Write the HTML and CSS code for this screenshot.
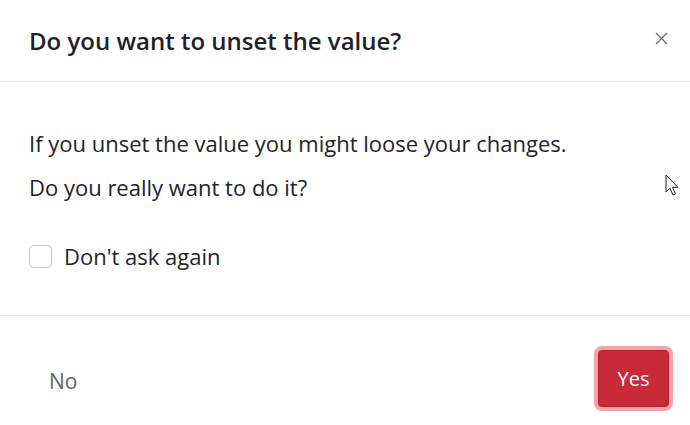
FILE: index.html
```html
<!DOCTYPE html>
<html>
<head>
<meta charset="utf-8">
<link rel="stylesheet" href="styles.css">
</head>
<body>
<div class="modal">
  <div class="modal-header">
    <h5 class="modal-title">Do you want to unset the value?</h5>
    <button class="close" aria-label="Close">
      <svg width="13" height="13" viewBox="0 0 13 13"><path d="M1 1L12 12M12 1L1 12" stroke="#6b6f73" stroke-width="1.3" fill="none"/></svg>
    </button>
  </div>
  <div class="modal-body">
    <p class="line">If you unset the value you might loose your changes.</p>
    <p class="line">Do you really want to do it?</p>
    <label class="check">
      <span class="box"></span>
      <span>Don't ask again</span>
    </label>
  </div>
  <div class="modal-footer">
    <button class="btn-no">No</button>
    <button class="btn-yes">Yes</button>
  </div>
  <svg class="cursor" width="16" height="24" viewBox="0 0 16 24"><path d="M1 1L1 18L5 14.2L8 21L10.5 20L7.6 13.3L13 13.3Z" fill="#fff" stroke="#222" stroke-width="1" stroke-linejoin="round"/></svg>
</div>
</body>
</html>
```
FILE: styles.css
```css
html, body {
  margin: 0;
  padding: 0;
  background: #fff;
}
body {
  font-family: "Open Sans", "Noto Sans", sans-serif;
  color: #212529;
}
.modal {
  position: relative;
  width: 690px;
  height: 425px;
  display: flex;
  flex-direction: column;
}
.modal-header {
  height: 82px;
  flex: none;
  box-sizing: border-box;
  border-bottom: 1px solid #dee2e6;
  display: flex;
  align-items: center;
  justify-content: space-between;
  padding: 0 19px 0 29px;
}
.modal-title {
  margin: 0;
  font-size: 24px;
  font-weight: 600;
  color: #1f2226;
}
.close {
  background: none;
  border: 0;
  padding: 0;
  width: 20px;
  height: 20px;
  display: flex;
  align-items: center;
  justify-content: center;
  margin-top: -4px;
}
.modal-body {
  height: 234px;
  flex: none;
  box-sizing: border-box;
  border-bottom: 1px solid #dee2e6;
  padding: 46px 29px 0;
}
.line {
  margin: 0 0 14px;
  font-size: 22px;
  line-height: 30px;
}
.check {
  display: flex;
  align-items: center;
  gap: 12px;
  margin-top: 39px;
  font-size: 22px;
  line-height: 30px;
}
.box {
  width: 23px;
  height: 23px;
  border: 1px solid #c4c7ca;
  border-radius: 5px;
  box-sizing: border-box;
  background: #fff;
}
.modal-footer {
  flex: 1;
  display: flex;
  align-items: center;
  justify-content: space-between;
  padding: 16px 21px 0 29px;
}
.btn-no {
  font-family: inherit;
  font-size: 21px;
  background: none;
  border: 0;
  color: #5e6470;
  padding: 10px 20px;
  margin-top: 4px;
}
.btn-yes {
  font-family: inherit;
  font-size: 20px;
  color: #fff;
  background: #c82a38;
  border: 1px solid #b01f2c;
  border-radius: 4px;
  width: 71px;
  height: 57px;
  box-shadow: 0 0 0 4px #f4a3a9;
  padding: 0;
}
.cursor {
  position: absolute;
  left: 665px;
  top: 174px;
}
```
